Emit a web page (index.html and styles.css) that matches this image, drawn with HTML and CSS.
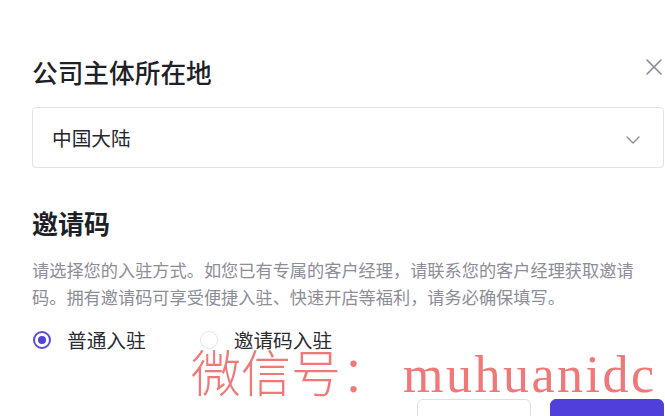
FILE: index.html
```html
<!DOCTYPE html>
<html lang="zh-CN">
<head>
<meta charset="utf-8">
<title>公司主体所在地</title>
<link rel="stylesheet" href="styles.css">
</head>
<body>
<div class="dialog">
  <div class="header">
    <h2 class="title">公司主体所在地</h2>
    <span class="close" aria-label="关闭">
      <svg width="18" height="18" viewBox="0 0 18 18"><path d="M2 2 L16 16 M16 2 L2 16" stroke="#8a8a96" stroke-width="1.6" fill="none" stroke-linecap="round"/></svg>
    </span>
  </div>
  <div class="select">
    <span class="select-value">中国大陆</span>
    <svg class="chevron" width="14" height="8" viewBox="0 0 14 8"><path d="M1 1 L7 7 L13 1" stroke="#8c8c96" stroke-width="1.4" fill="none" stroke-linecap="round" stroke-linejoin="round"/></svg>
  </div>
  <h2 class="section-title">邀请码</h2>
  <p class="desc">请选择您的入驻方式。如您已有专属的客户经理，请联系您的客户经理获取邀请码。拥有邀请码可享受便捷入驻、快速开店等福利，请务必确保填写。</p>
  <div class="radios">
    <label class="radio checked"><span class="dot"></span><span class="radio-label">普通入驻</span></label>
    <label class="radio"><span class="dot"></span><span class="radio-label">邀请码入驻</span></label>
  </div>
  <div class="actions">
    <button class="btn btn-cancel">取消</button>
    <button class="btn btn-primary">确定</button>
  </div>
</div>
<div class="watermark"><span class="wm-cjk">微信号：</span><span class="wm-latin">muhuanidc</span></div>
</body>
</html>
```
FILE: styles.css
```css
html, body {
  margin: 0;
  padding: 0;
  background: #ffffff;
  height: 416px;
  overflow: hidden;
}
body {
  font-family: "Noto Sans CJK SC", "Noto Sans", sans-serif;
  color: #1f1f29;
  position: relative;
}
.dialog {
  padding: 54px 1px 0 32px;
  width: 632px;
}
.header {
  display: flex;
  justify-content: space-between;
  align-items: center;
  height: 36px;
}
.title {
  margin: 0;
  font-size: 25.7px;
  line-height: 36px;
  font-weight: 500;
  color: #1f1f29;
}
.close {
  display: flex;
  margin-right: 1px;
  margin-top: -10px;
}
.select {
  margin-top: 17px;
  height: 59px;
  border: 1px solid #e1e1e8;
  border-radius: 4px;
  display: flex;
  align-items: center;
  justify-content: space-between;
  padding: 0 23px 0 19px;
}
.select-value {
  font-size: 19.7px;
  color: #26262e;
}
.chevron {
  margin-top: 4px;
}
.section-title {
  margin: 37px 0 0;
  font-size: 26px;
  line-height: 36px;
  font-weight: 600;
  color: #1f1f29;
}
.desc {
  margin: 15px 0 0;
  font-size: 17.2px;
  line-height: 27px;
  color: #8d8d98;
}
.radios {
  margin-top: 16px;
  display: flex;
  align-items: center;
  gap: 53px;
  height: 28px;
}
.radio {
  display: flex;
  align-items: center;
  gap: 16px;
}
.dot {
  width: 18px;
  height: 18px;
  box-sizing: border-box;
  border-radius: 50%;
  border: 1px solid #e6e6ea;
  position: relative;
  margin-left: 1px;
}
.radio.checked .dot {
  border: 2px solid #5a4ddc;
}
.radio.checked .dot::after {
  content: "";
  position: absolute;
  left: 3px;
  top: 3px;
  width: 8px;
  height: 8px;
  border-radius: 50%;
  background: #4f43e0;
}
.radio-label {
  font-size: 19.7px;
  line-height: 28px;
  color: #2b2b33;
}
.actions {
  margin-top: 45px;
  display: flex;
  justify-content: flex-end;
  gap: 19px;
}
.btn {
  width: 114px;
  height: 50px;
  border-radius: 6px;
  font-family: "Noto Sans CJK SC", sans-serif;
  font-size: 17px;
}
.btn-cancel {
  background: #ffffff;
  border: 1px solid #dedee5;
  color: #2b2b33;
}
.btn-primary {
  background: #4f40dc;
  border: 1px solid #4f40dc;
  color: #ffffff;
}
.watermark {
  position: absolute;
  left: 191px;
  top: 340px;
  color: #f07878;
  white-space: nowrap;
  line-height: 60px;
}
.wm-cjk {
  font-family: "Noto Sans CJK SC", sans-serif;
  font-weight: 300;
  font-size: 50px;
}
.wm-latin {
  font-family: "Liberation Serif", serif;
  font-size: 52px;
  letter-spacing: 2.5px;
  margin-left: 12px;
}
```
